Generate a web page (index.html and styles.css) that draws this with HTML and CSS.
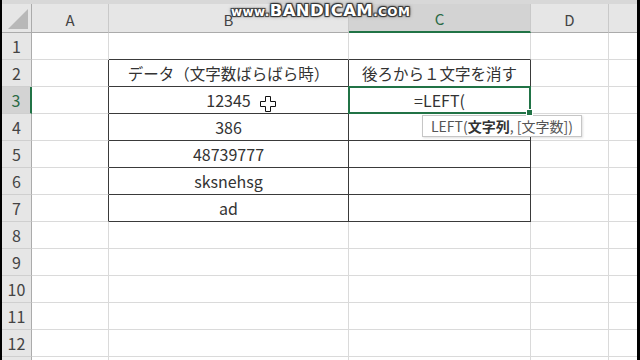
FILE: index.html
```html
<!DOCTYPE html>
<html lang="ja">
<head>
<meta charset="utf-8">
<link rel="stylesheet" href="styles.css">
</head>
<body>
<div class="frame">
  <div class="sheet">
    <div class="hd corner"><span class="tri"></span></div>
    <div class="hd col">A</div>
    <div class="hd col">B</div>
    <div class="hd col sel-col">C</div>
    <div class="hd col">D</div>
    <div class="hd col last"></div>

    <div class="hd row">1</div>
    <div class="c"></div><div class="c db"></div><div class="c db"></div><div class="c"></div><div class="c last"></div>

    <div class="hd row">2</div>
    <div class="c dr"></div><div class="c db dr jp">データ（文字数ばらばら時）</div><div class="c db dr jp">後ろから１文字を消す</div><div class="c"></div><div class="c last"></div>

    <div class="hd row sel-row">3</div>
    <div class="c dr"></div>
    <div class="c db dr cur-host">12345<svg class="cursor" width="16" height="16" viewBox="0 0 16 16"><path d="M5.5 0.5h5v5h5v5h-5v5h-5v-5h-5v-5h5z" fill="#fff" stroke="#111" stroke-width="1"/></svg></div>
    <div class="c db dr active">=LEFT(</div>
    <div class="c"></div><div class="c last"></div>

    <div class="hd row">4</div>
    <div class="c dr"></div><div class="c db dr">386</div><div class="c db dr"></div><div class="c"></div><div class="c last"></div>

    <div class="hd row">5</div>
    <div class="c dr"></div><div class="c db dr">48739777</div><div class="c db dr"></div><div class="c"></div><div class="c last"></div>

    <div class="hd row">6</div>
    <div class="c dr"></div><div class="c db dr">sksnehsg</div><div class="c db dr"></div><div class="c"></div><div class="c last"></div>

    <div class="hd row">7</div>
    <div class="c dr"></div><div class="c db dr">ad</div><div class="c db dr"></div><div class="c"></div><div class="c last"></div>

    <div class="hd row">8</div>
    <div class="c"></div><div class="c"></div><div class="c"></div><div class="c"></div><div class="c last"></div>
    <div class="hd row">9</div>
    <div class="c"></div><div class="c"></div><div class="c"></div><div class="c"></div><div class="c last"></div>
    <div class="hd row">10</div>
    <div class="c"></div><div class="c"></div><div class="c"></div><div class="c"></div><div class="c last"></div>
    <div class="hd row">11</div>
    <div class="c"></div><div class="c"></div><div class="c"></div><div class="c"></div><div class="c last"></div>
    <div class="hd row">12</div>
    <div class="c"></div><div class="c"></div><div class="c"></div><div class="c"></div><div class="c last"></div>
    <div class="hd row"></div>
    <div class="c"></div><div class="c"></div><div class="c"></div><div class="c"></div><div class="c last"></div>
  </div>
  <div class="tip">LEFT(<b>文字列</b>, [文字数])</div>
  <div class="watermark"><span class="small">www.</span>BANDICAM<span class="small">.COM</span></div>
</div>
</body>
</html>
```
FILE: styles.css
```css
html, body {
  margin: 0;
  padding: 0;
  background: #000;
  width: 640px;
  height: 360px;
  overflow: hidden;
}
.frame {
  position: relative;
  margin-left: 2px;
  width: 635px;
  height: 360px;
  padding-top: 4px;
  box-sizing: border-box;
  background: #d8d8d8;
  overflow: hidden;
  font-family: "Noto Sans CJK JP", "Noto Sans", sans-serif;
}
.sheet {
  display: grid;
  grid-template-columns: 30px 77px 240px 182px 78px 28px;
  grid-template-rows: 29px repeat(13, 27px);
}
.sheet > div {
  box-sizing: border-box;
  display: flex;
  align-items: center;
  justify-content: center;
  white-space: nowrap;
}
.hd {
  background: #e6e6e6;
  color: #444;
}
.col {
  border-right: 1px solid #c9c9c9;
  border-bottom: 1px solid #ababab;
  font-size: 15px;
  padding-top: 2px;
}
.corner {
  position: relative;
  border-right: 1px solid #ababab;
  border-bottom: 1px solid #ababab;
}
.tri {
  position: absolute;
  right: 3px;
  bottom: 3px;
  width: 0;
  height: 0;
  border-left: 20px solid transparent;
  border-bottom: 20px solid #b8b8b8;
}
.row {
  border-right: 1px solid #ababab;
  border-bottom: 1px solid #cfcfcf;
  font-size: 16px;
}
.sel-col {
  background: #d3d3d3;
  color: #2a6a45;
  border-bottom: 2px solid #217346;
}
.sel-row {
  background: #d3d3d3;
  color: #2a6a45;
  border-right: 2px solid #217346;
}
.c {
  background: #fff;
  border-right: 1px solid #dadada;
  border-bottom: 1px solid #dadada;
  font-size: 16px;
  color: #333;
}
.sheet > .jp {
  font-size: 15.5px;
}
.sheet > .last {
  border-right: none;
}
.sheet > .db {
  border-bottom-color: #3a3a3a;
}
.sheet > .dr {
  border-right-color: #3a3a3a;
}
.active {
  position: relative;
}
.active::after {
  content: "";
  position: absolute;
  left: -1px;
  top: -1px;
  right: -1px;
  bottom: -1px;
  border: 2px solid #217346;
}
.active::before {
  content: "";
  position: absolute;
  right: -3px;
  bottom: -3px;
  width: 5px;
  height: 5px;
  background: #217346;
  border: 1px solid #fff;
  z-index: 2;
}
.cur-host {
  position: relative;
}
.cursor {
  position: absolute;
  left: 151px;
  top: 9px;
}
.tip {
  position: absolute;
  left: 420px;
  top: 115px;
  height: 22px;
  padding: 0 8px;
  display: flex;
  align-items: center;
  background: #fff;
  border: 1px solid #c6c6c6;
  box-shadow: 1px 1px 2px rgba(0,0,0,0.12);
  font-size: 14px;
  color: #555;
  white-space: nowrap;
  box-sizing: border-box;
}
.tip b {
  color: #333;
  font-weight: bold;
}
.watermark {
  position: absolute;
  left: 229px;
  top: 1px;
  font-family: "DejaVu Sans", "Liberation Sans", sans-serif;
  font-weight: bold;
  font-size: 16.5px;
  color: #fff;
  letter-spacing: 0.4px;
  text-shadow: 0 0 1px #333, 1px 1px 1px #333, -1px -1px 1px #333, 1px -1px 1px #333, -1px 1px 1px #333, 0 0 4px rgba(0,0,0,0.5);
  white-space: nowrap;
}
.watermark .small {
  font-size: 12px;
}
```
